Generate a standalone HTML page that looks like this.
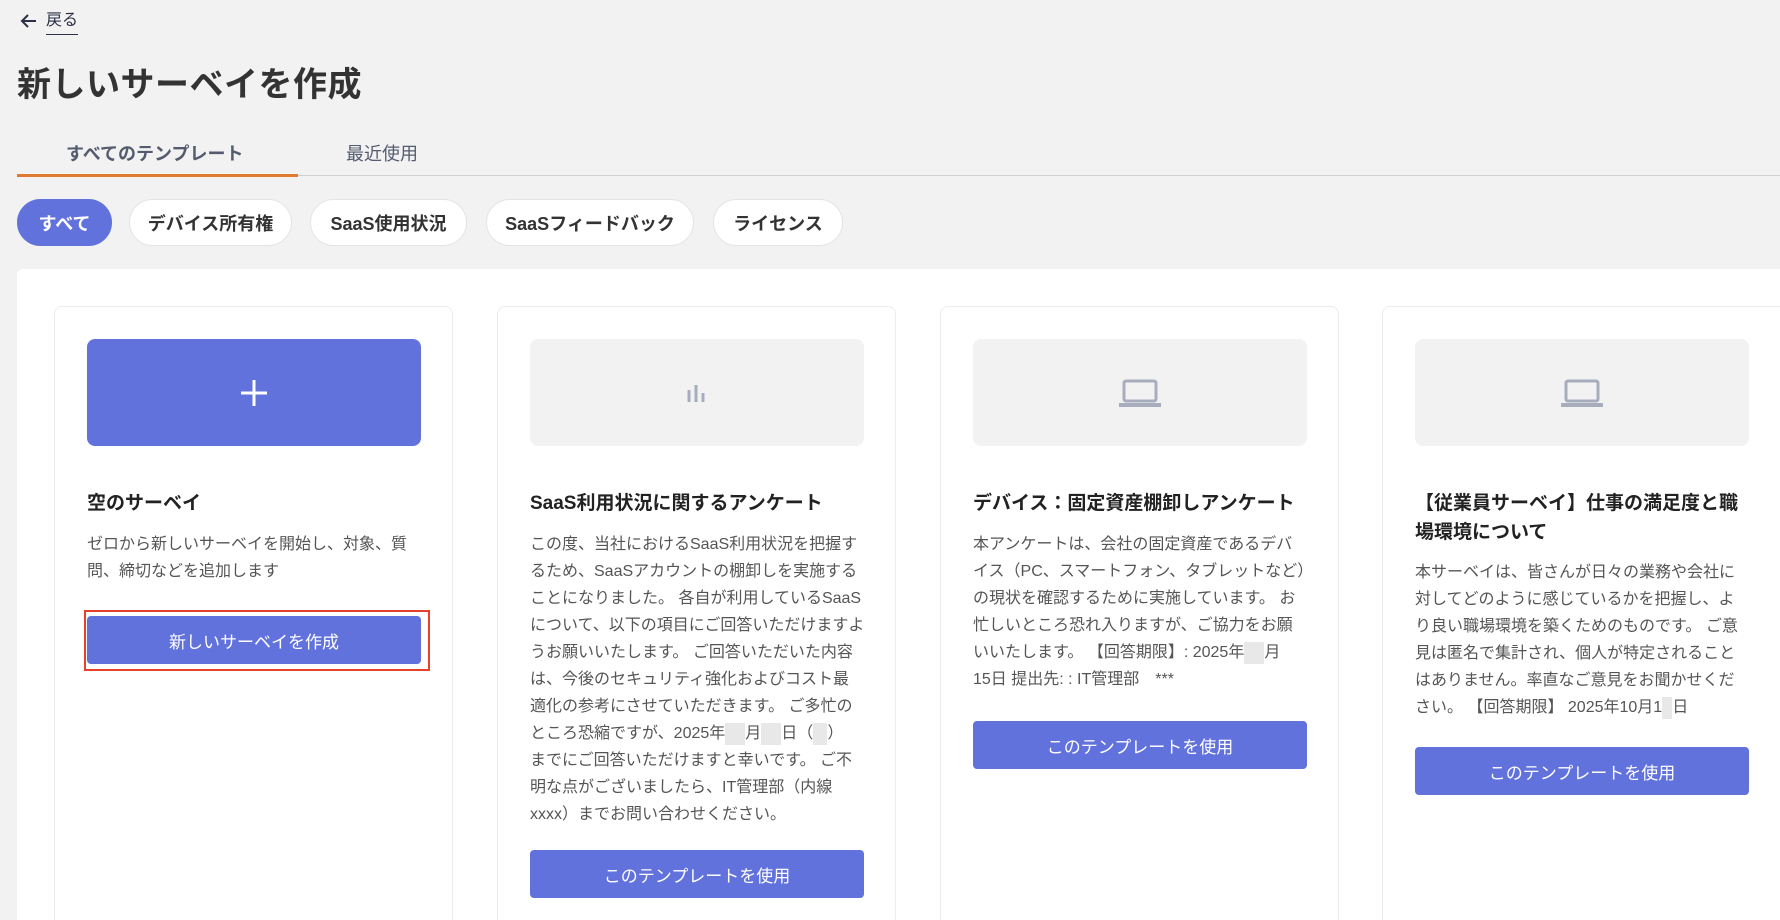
<!DOCTYPE html>
<html><head><meta charset="utf-8"><style>
*{box-sizing:border-box;margin:0;padding:0}
html,body{width:1780px;height:920px;overflow:hidden}
body{background:#f2f2f2;font-family:"Liberation Sans","Noto Sans CJK JP",sans-serif;color:#222;position:relative}
.abs{position:absolute}
.back{left:20px;top:6px;font-size:16px;color:#2b3044;display:flex;align-items:center;gap:8px}
.back span{border-bottom:1.5px solid #2b3044;padding-bottom:4px}
h1{position:absolute;left:17px;top:57px;font-size:34px;font-weight:700;color:#333;letter-spacing:0.5px}
.tabline{left:17px;right:0;top:175px;height:1px;background:#d0d0d0}
.tabact{left:17px;top:174px;width:281px;height:3px;background:#e07a2e}
.tab{top:140px;font-size:18px;color:#555b6e}
.chip{top:199px;height:47px;border-radius:24px;background:#fff;border:1px solid #e4e4e4;font-size:18px;font-weight:700;color:#333;display:flex;align-items:center;justify-content:center}
.panel{left:17px;top:269px;right:0;height:651px;background:#fff;border-radius:6px 0 0 0}
.card{top:306px;width:399px;height:614px;background:#fff;border:1px solid #ececec;border-bottom:none;border-radius:8px 8px 0 0}
.ban{position:absolute;left:32px;top:32px;width:334px;height:107px;border-radius:8px;background:#f2f2f3;display:flex;align-items:center;justify-content:center}
.ct{position:absolute;left:32px;top:182px;width:340px;font-size:19px;font-weight:700;line-height:29px;color:#222}
.cd{position:absolute;left:32px;width:345px;font-size:16px;line-height:27px;color:#555;white-space:nowrap}
.btn{position:absolute;left:32px;width:334px;height:48px;border-radius:4px;background:#6272dd;color:#fff;font-size:17px;display:flex;align-items:center;justify-content:center}
.r{display:inline-block;width:20px;height:22px;background:#e8e8e8;vertical-align:middle}
</style></head><body>
<div class="abs back"><svg width="18" height="18" viewBox="0 0 18 18"><path d="M16 9H3M8 3L2 9l6 6" fill="none" stroke="#2b3044" stroke-width="2"/></svg><span>戻る</span></div>
<h1>新しいサーベイを作成</h1>
<div class="abs tabline"></div><div class="abs tabact"></div>
<div class="abs tab" style="left:66px;font-weight:700">すべてのテンプレート</div>
<div class="abs tab" style="left:346px">最近使用</div>
<div class="abs chip" style="left:17px;width:95px;background:#6272dd;border-color:#6272dd;color:#fff">すべて</div>
<div class="abs chip" style="left:129px;width:163px">デバイス所有権</div>
<div class="abs chip" style="left:310px;width:157px">SaaS使用状況</div>
<div class="abs chip" style="left:486px;width:208px">SaaSフィードバック</div>
<div class="abs chip" style="left:713px;width:130px">ライセンス</div>
<div class="abs panel"></div>

<div class="abs card" style="left:54px">
 <div class="ban" style="background:#6272dd"><svg width="30" height="30"><path d="M15 2v26M2 15h26" stroke="#fff" stroke-width="3"/></svg></div>
 <div class="ct">空のサーベイ</div>
 <div class="cd" style="top:224px">ゼロから新しいサーベイを開始し、対象、質<br>問、締切などを追加します</div>
 <div style="position:absolute;left:29px;top:303px;width:346px;height:61px;border:2px solid #e5412b"></div>
 <div class="btn" style="top:309px">新しいサーベイを作成</div>
</div>

<div class="abs card" style="left:497px">
 <div class="ban"><svg width="22" height="22"><path d="M3 8v12M10 3v17M17 11v9" stroke="#a8adbd" stroke-width="3"/></svg></div>
 <div class="ct">SaaS利用状況に関するアンケート</div>
 <div class="cd" style="top:224px">この度、当社におけるSaaS利用状況を把握す<br>るため、SaaSアカウントの棚卸しを実施する<br>ことになりました。 各自が利用しているSaaS<br>について、以下の項目にご回答いただけますよ<br>うお願いいたします。 ご回答いただいた内容<br>は、今後のセキュリティ強化およびコスト最<br>適化の参考にさせていただきます。 ご多忙の<br>ところ恐縮ですが、2025年<span class="r"></span>月<span class="r"></span>日（<span class="r" style="width:14px"></span>）<br>までにご回答いただけますと幸いです。 ご不<br>明な点がございましたら、IT管理部（内線<br>xxxx）までお問い合わせください。</div>
 <div class="btn" style="top:543px">このテンプレートを使用</div>
</div>

<div class="abs card" style="left:940px">
 <div class="ban"><svg width="44" height="30" viewBox="0 0 44 30"><rect x="6" y="3" width="32" height="20" rx="2" fill="none" stroke="#a8adbd" stroke-width="3"/><rect x="1" y="25" width="42" height="4" fill="#a8adbd"/></svg></div>
 <div class="ct">デバイス：固定資産棚卸しアンケート</div>
 <div class="cd" style="top:224px">本アンケートは、会社の固定資産であるデバ<br>イス（PC、スマートフォン、タブレットなど）<br>の現状を確認するために実施しています。 お<br>忙しいところ恐れ入りますが、ご協力をお願<br>いいたします。 【回答期限】: 2025年<span class="r"></span>月<br>15日 提出先: : IT管理部　***</div>
 <div class="btn" style="top:414px">このテンプレートを使用</div>
</div>

<div class="abs card" style="left:1382px;width:420px">
 <div class="ban"><svg width="44" height="30" viewBox="0 0 44 30"><rect x="6" y="3" width="32" height="20" rx="2" fill="none" stroke="#a8adbd" stroke-width="3"/><rect x="1" y="25" width="42" height="4" fill="#a8adbd"/></svg></div>
 <div class="ct">【従業員サーベイ】仕事の満足度と職<br>場環境について</div>
 <div class="cd" style="top:252px">本サーベイは、皆さんが日々の業務や会社に<br>対してどのように感じているかを把握し、よ<br>り良い職場環境を築くためのものです。 ご意<br>見は匿名で集計され、個人が特定されること<br>はありません。率直なご意見をお聞かせくだ<br>さい。 【回答期限】 2025年10月1<span class="r" style="width:10px"></span>日</div>
 <div class="btn" style="top:440px">このテンプレートを使用</div>
</div>
</body></html>
